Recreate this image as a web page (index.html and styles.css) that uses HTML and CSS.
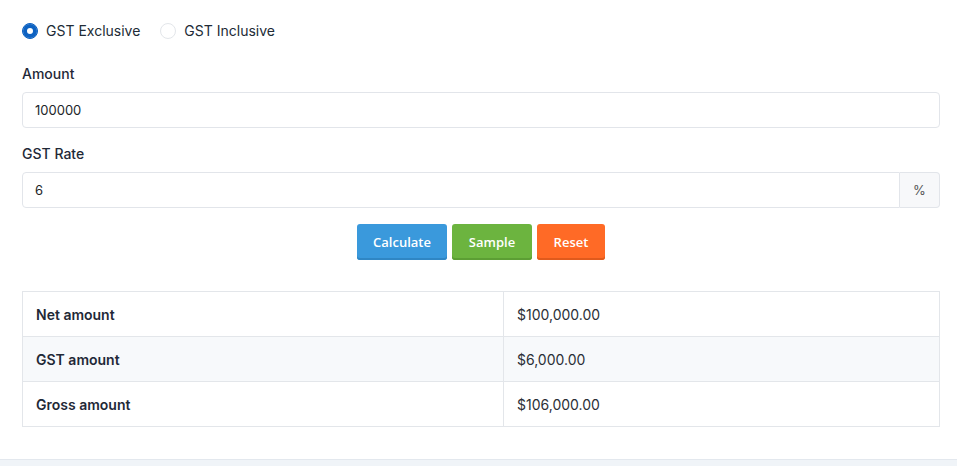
FILE: index.html
```html
<!DOCTYPE html>
<html lang="en">
<head>
    <meta charset="UTF-8">
    <meta name="viewport" content="width=device-width, initial-scale=1.0">
    <title>GST Calculator</title>
    <link rel="stylesheet" href="styles.css">
</head>
<body>
    <div class="calc">
        <div class="radio-row">
            <label class="radio"><input type="radio" name="mode" checked> GST Exclusive</label>
            <label class="radio"><input type="radio" name="mode"> GST Inclusive</label>
        </div>

        <div class="field">
            <label for="amount">Amount</label>
            <input type="text" id="amount" value="100000">
        </div>

        <div class="field">
            <label for="rate">GST Rate</label>
            <div class="input-group">
                <input type="text" id="rate" value="6">
                <span class="addon">%</span>
            </div>
        </div>

        <div class="buttons">
            <button class="btn btn-blue">Calculate</button>
            <button class="btn btn-green">Sample</button>
            <button class="btn btn-orange">Reset</button>
        </div>

        <table class="results">
            <tr>
                <th>Net amount</th>
                <td>$100,000.00</td>
            </tr>
            <tr>
                <th>GST amount</th>
                <td>$6,000.00</td>
            </tr>
            <tr>
                <th>Gross amount</th>
                <td>$106,000.00</td>
            </tr>
        </table>
    </div>
    <div class="footer-band"></div>
</body>
</html>
```

FILE: styles.css
```css
body {
    font-family: 'Inter', 'Liberation Sans', sans-serif;
    margin: 0;
    padding: 0;
    background-color: #fff;
    color: #1f2937;
}

.calc {
    padding: 22px 17px 32px 22px;
}

.radio-row {
    display: flex;
    gap: 20px;
    margin-bottom: 26px;
}

.radio {
    display: flex;
    align-items: center;
    gap: 8px;
    font-size: 14px;
    color: #212b36;
}

.radio input {
    appearance: none;
    width: 16px;
    height: 16px;
    margin: 0;
    border: 1px solid #e3e6ea;
    border-radius: 50%;
    background: #fff;
}

.radio input:checked {
    border-color: #0d62c2;
    background: #0d62c2;
    box-shadow: inset 0 0 0 4px #0d62c2, inset 0 0 0 8px #fff;
}

.field {
    margin-bottom: 17px;
}

.field label {
    display: block;
    font-size: 14px;
    font-weight: 500;
    color: #1f2937;
    margin-bottom: 10px;
}

.field input {
    box-sizing: border-box;
    width: 100%;
    height: 36px;
    padding: 0 12px;
    font-family: inherit;
    font-size: 13px;
    color: #212529;
    border: 1px solid #e2e5ea;
    border-radius: 4px;
    outline: none;
}

.input-group {
    display: flex;
}

.input-group input {
    border-radius: 4px 0 0 4px;
}

.addon {
    box-sizing: border-box;
    width: 40px;
    height: 36px;
    flex-shrink: 0;
    display: flex;
    align-items: center;
    justify-content: center;
    font-size: 13px;
    color: #555;
    background: #f7f8fa;
    border: 1px solid #e2e5ea;
    border-left: none;
    border-radius: 0 4px 4px 0;
}

.buttons {
    display: flex;
    justify-content: center;
    gap: 5px;
    margin-top: -1px;
    margin-bottom: 31px;
}

.btn {
    height: 36px;
    padding: 0 12px;
    font-family: 'Open Sans', sans-serif;
    font-size: 13px;
    font-weight: 600;
    color: #fff;
    border: none;
    border-radius: 3px;
    cursor: pointer;
}

.btn-blue {
    width: 90px;
    background: #3a99dc;
    box-shadow: inset 0 -2px 0 #2f86c4;
}

.btn-green {
    width: 80px;
    background: #6cb43f;
    box-shadow: inset 0 -2px 0 #5c9e34;
}

.btn-orange {
    width: 68px;
    background: #ff6a26;
    box-shadow: inset 0 -2px 0 #e05a1c;
}

.results {
    width: 100%;
    border-collapse: collapse;
    font-size: 14px;
}

.results th,
.results td {
    height: 45px;
    box-sizing: border-box;
    padding: 0 13px;
    border: 1px solid #e3e6ea;
    text-align: left;
}

.results th {
    width: 481px;
    font-weight: 600;
    color: #1f2937;
}

.results td {
    color: #2b2f36;
}

.results tr:nth-child(2) {
    background: #f7f9fb;
}

.footer-band {
    height: 10px;
    background: #f0f4f8;
    border-top: 1px solid #e3e8ee;
}
```
